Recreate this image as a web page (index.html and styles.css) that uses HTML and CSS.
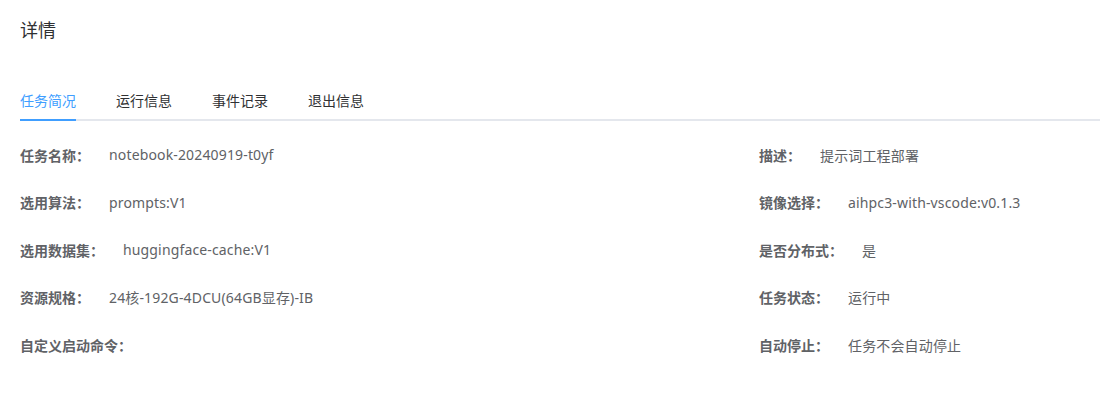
FILE: index.html
```html
<!DOCTYPE html>
<html lang="zh-CN">
<head>
<meta charset="utf-8">
<title>详情</title>
<link rel="stylesheet" href="styles.css">
</head>
<body>
<div class="page">
  <h1 class="title">详情</h1>
  <div class="tabs">
    <div class="tab active">任务简况</div>
    <div class="tab">运行信息</div>
    <div class="tab">事件记录</div>
    <div class="tab">退出信息</div>
  </div>
  <div class="info">
    <div class="item"><span class="label">任务名称：</span><span class="value">notebook-20240919-t0yf</span></div>
    <div class="item"><span class="label">描述：</span><span class="value">提示词工程部署</span></div>
    <div class="item"><span class="label">选用算法：</span><span class="value">prompts:V1</span></div>
    <div class="item"><span class="label">镜像选择：</span><span class="value">aihpc3-with-vscode:v0.1.3</span></div>
    <div class="item"><span class="label">选用数据集：</span><span class="value">huggingface-cache:V1</span></div>
    <div class="item"><span class="label">是否分布式：</span><span class="value">是</span></div>
    <div class="item"><span class="label">资源规格：</span><span class="value">24核-192G-4DCU(64GB显存)-IB</span></div>
    <div class="item"><span class="label">任务状态：</span><span class="value">运行中</span></div>
    <div class="item"><span class="label">自定义启动命令：</span><span class="value"></span></div>
    <div class="item"><span class="label">自动停止：</span><span class="value">任务不会自动停止</span></div>
  </div>
</div>
</body>
</html>
```

FILE: styles.css
```css
html, body {
  margin: 0;
  padding: 0;
  background: #ffffff;
}
body {
  font-family: "Noto Sans", "Noto Sans CJK SC", sans-serif;
  font-size: 14px;
  color: #606266;
}
.page {
  padding: 19px 0 0 20px;
}
.title {
  margin: 0;
  font-size: 18px;
  font-weight: normal;
  line-height: 22px;
  color: #303133;
}
.tabs {
  margin-top: 40px;
  display: flex;
  height: 40px;
  box-shadow: inset 0 -2px 0 #e4e7ed;
}
.tab {
  line-height: 40px;
  height: 40px;
  padding: 0 20px;
  color: #303133;
  font-size: 14px;
  box-sizing: border-box;
}
.tab:first-child {
  padding-left: 0;
}
.tab.active {
  color: #409eff;
  box-shadow: inset 0 -2px 0 #409eff;
  padding-right: 0;
}
.tab.active + .tab {
  padding-left: 40px;
}
.info {
  margin-top: 10px;
  display: grid;
  grid-template-columns: 739px 1fr;
  grid-auto-rows: 47.5px;
}
.item {
  display: flex;
  align-items: center;
  white-space: nowrap;
}
.label {
  font-weight: bold;
  color: #606266;
  margin-right: 19px;
}
.value {
  color: #606266;
  letter-spacing: 0.15px;
}
```
